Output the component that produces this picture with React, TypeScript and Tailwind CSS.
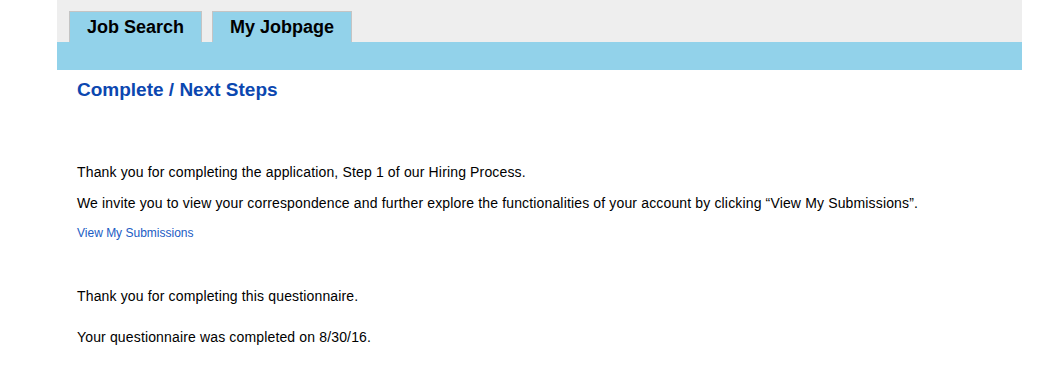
export default function App() {
    return (
        <main className="min-h-[371px] bg-white font-['Liberation_Sans',Arial,sans-serif]">
            <div className="ml-[57px] w-[965px]">
                <div className="flex h-[42px] items-end gap-x-[10px] bg-[#eeeeee] pl-[12px]">
                    <div className="flex h-[31px] w-[133px] items-center justify-center border border-b-0 border-[#c4c4c4] bg-[#92d2ea]">
                        <p className="text-[18px] font-bold text-black">Job Search</p>
                    </div>
                    <div className="flex h-[31px] w-[140px] items-center justify-center border border-b-0 border-[#c4c4c4] bg-[#92d2ea]">
                        <p className="text-[18px] font-bold text-black">My Jobpage</p>
                    </div>
                </div>
                <div className="h-[28px] bg-[#92d2ea]"></div>
                <section className="pl-[20px]">
                    <h2 className="mt-[10px] text-[19px] font-bold leading-[20px] text-[#0b47b0]">Complete / Next Steps</h2>
                    <p className="mt-[64px] text-[14px] leading-[16px] tracking-[0.15px] text-black">Thank you for completing the application, Step 1 of our Hiring Process.</p>
                    <p className="mt-[15px] text-[14px] leading-[16px] tracking-[0.15px] text-black">We invite you to view your correspondence and further explore the functionalities of your account by clicking “View My Submissions”.</p>
                    <a href="#" className="mt-[15px] block text-[12px] leading-[14px] text-[#1a5cc4]">View My Submissions</a>
                    <p className="mt-[48px] text-[14px] leading-[16px] tracking-[0.15px] text-black">Thank you for completing this questionnaire.</p>
                    <p className="mt-[25px] text-[14px] leading-[16px] tracking-[0.15px] text-black">Your questionnaire was completed on 8/30/16.</p>
                </section>
            </div>
        </main>
    )
}
